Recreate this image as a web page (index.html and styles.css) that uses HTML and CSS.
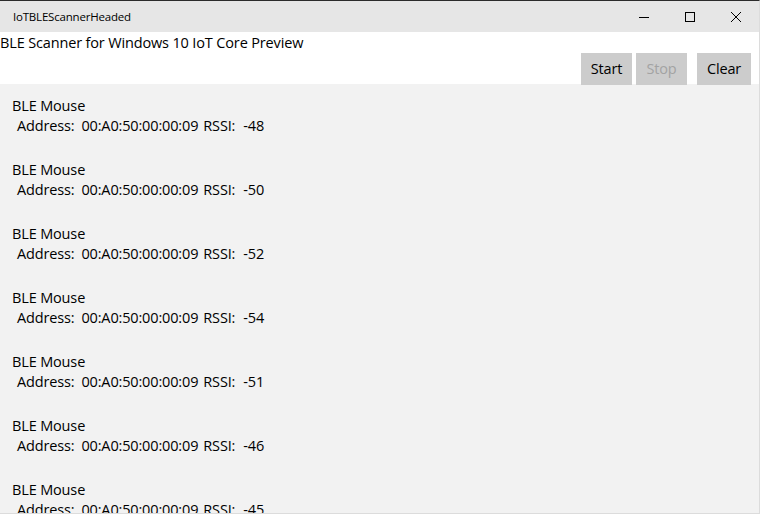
FILE: index.html
```html
<!DOCTYPE html>
<html>
<head>
<meta charset="utf-8">
<link rel="stylesheet" href="styles.css">
</head>
<body>
<div class="window">
  <div class="titlebar">
    <div class="title">IoTBLEScannerHeaded</div>
    <div class="caption">
      <div class="cap-btn"><svg width="10" height="10" viewBox="0 0 10 10"><line x1="0" y1="5.5" x2="10" y2="5.5" stroke="#000" stroke-width="1"/></svg></div>
      <div class="cap-btn"><svg width="10" height="10" viewBox="0 0 10 10"><rect x="0.5" y="0.5" width="9" height="9" fill="none" stroke="#000" stroke-width="1"/></svg></div>
      <div class="cap-btn"><svg width="10" height="10" viewBox="0 0 10 10"><path d="M0 0L10 10M10 0L0 10" stroke="#000" stroke-width="1"/></svg></div>
    </div>
  </div>
  <div class="header">
    <div class="app-title">BLE Scanner for Windows 10 IoT Core Preview</div>
    <div class="actions">
      <button class="btn btn-start">Start</button>
      <button class="btn btn-stop" disabled>Stop</button>
      <button class="btn btn-clear">Clear</button>
    </div>
  </div>
  <div class="list">
    <div class="item"><div class="name">BLE Mouse</div><div class="info"><span class="lbl">Address:</span><span class="addr">00:A0:50:00:00:09</span><span class="lbl rssi">RSSI:</span><span>-48</span></div></div>
    <div class="item"><div class="name">BLE Mouse</div><div class="info"><span class="lbl">Address:</span><span class="addr">00:A0:50:00:00:09</span><span class="lbl rssi">RSSI:</span><span>-50</span></div></div>
    <div class="item"><div class="name">BLE Mouse</div><div class="info"><span class="lbl">Address:</span><span class="addr">00:A0:50:00:00:09</span><span class="lbl rssi">RSSI:</span><span>-52</span></div></div>
    <div class="item"><div class="name">BLE Mouse</div><div class="info"><span class="lbl">Address:</span><span class="addr">00:A0:50:00:00:09</span><span class="lbl rssi">RSSI:</span><span>-54</span></div></div>
    <div class="item"><div class="name">BLE Mouse</div><div class="info"><span class="lbl">Address:</span><span class="addr">00:A0:50:00:00:09</span><span class="lbl rssi">RSSI:</span><span>-51</span></div></div>
    <div class="item"><div class="name">BLE Mouse</div><div class="info"><span class="lbl">Address:</span><span class="addr">00:A0:50:00:00:09</span><span class="lbl rssi">RSSI:</span><span>-46</span></div></div>
    <div class="item"><div class="name">BLE Mouse</div><div class="info"><span class="lbl">Address:</span><span class="addr">00:A0:50:00:00:09</span><span class="lbl rssi">RSSI:</span><span>-45</span></div></div>
  </div>
</div>
</body>
</html>
```

FILE: styles.css
```css
html, body {
  margin: 0;
  padding: 0;
  background: #f2f2f2;
}
body {
  font-family: "Open Sans", "Noto Sans", sans-serif;
  color: #000;
}
.window {
  width: 760px;
  height: 514px;
  box-sizing: border-box;
  border-top: 1px solid #2b2b2b;
  border-right: 1px solid #dcdcdc;
  border-bottom: 1px solid #dcdcdc;
  display: flex;
  flex-direction: column;
  overflow: hidden;
  background: #f2f2f2;
}
.titlebar {
  height: 31px;
  flex: none;
  background: #e6e6e6;
  display: flex;
  align-items: center;
  justify-content: space-between;
}
.title {
  font-size: 11.5px;
  letter-spacing: -0.2px;
  padding-left: 13px;
  padding-bottom: 1px;
}
.caption {
  display: flex;
  height: 31px;
}
.cap-btn {
  width: 46px;
  height: 31px;
  display: flex;
  align-items: center;
  justify-content: center;
}
.cap-btn svg { display: block; }
.header {
  height: 52px;
  flex: none;
  background: #fff;
  display: flex;
  flex-direction: column;
  justify-content: space-between;
}
.app-title {
  font-size: 14.5px;
  letter-spacing: -0.15px;
  line-height: 20px;
  padding-top: 1px;
}
.actions {
  display: flex;
  justify-content: flex-end;
  padding-right: 8px;
}
.btn {
  font-family: inherit;
  font-size: 14.5px;
  letter-spacing: -0.15px;
  height: 32px;
  border: 0;
  margin: 0;
  padding: 0 0 1px;
  background: #cccccc;
  color: #000;
  border-radius: 0;
}
.btn-start { width: 51px; }
.btn-stop { width: 51px; margin-left: 4px; color: #a3a3a3; }
.btn-clear { width: 54px; margin-left: 10px; }
.list {
  flex: 1;
  padding: 12px 0 0 12px;
  display: flex;
  flex-direction: column;
  gap: 24px;
}
.item {
  font-size: 14.5px;
  letter-spacing: -0.15px;
  line-height: 20px;
}
.info {
  padding-left: 5px;
  display: flex;
}
.lbl { margin-right: 7px; }
.lbl.rssi { margin-right: 8px; }
.addr { margin-right: 5px; }
```
